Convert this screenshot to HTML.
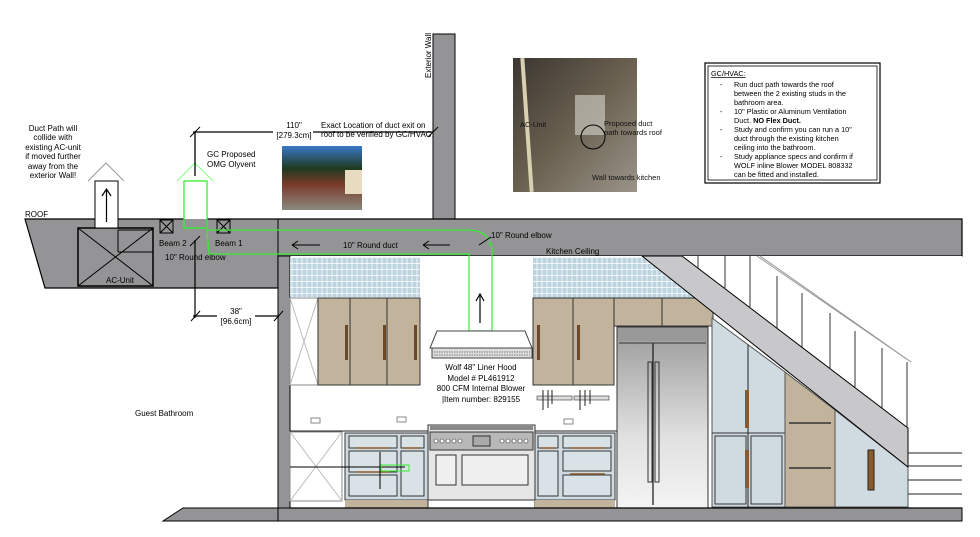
<!DOCTYPE html>
<html><head><meta charset="utf-8"><style>
html,body{margin:0;padding:0;background:#fff;width:980px;height:537px;overflow:hidden}
svg{display:block;font-family:"Liberation Sans",sans-serif}
</style></head><body>
<svg width="980" height="537" viewBox="0 0 980 537" xmlns="http://www.w3.org/2000/svg">
<defs>
<pattern id="tile" width="10" height="6" patternUnits="userSpaceOnUse">
<rect width="10" height="6" fill="#bcd4df"/>
<path d="M0 5.5H10M2 0V6M7 0V6" stroke="#fff" stroke-width="0.8"/>
</pattern>
<linearGradient id="fr" x1="0" y1="0" x2="0" y2="1">
<stop offset="0" stop-color="#9a9a9a"/><stop offset="0.6" stop-color="#e0e0e0"/><stop offset="1" stop-color="#f4f4f4"/>
</linearGradient>
<linearGradient id="ph1" x1="0" y1="0" x2="0" y2="1">
<stop offset="0" stop-color="#3a78c8"/><stop offset="0.35" stop-color="#1e3a20"/><stop offset="0.6" stop-color="#7a3a2a"/><stop offset="1" stop-color="#8a8a80"/>
</linearGradient>
<linearGradient id="ph2" x1="0" y1="0" x2="1" y2="1">
<stop offset="0" stop-color="#3a3630"/><stop offset="0.5" stop-color="#6a6050"/><stop offset="1" stop-color="#9a9488"/>
</linearGradient>
</defs>

<!-- exterior wall -->
<rect x="433" y="34" width="22" height="186" fill="#949496" stroke="#000" stroke-width="1"/>
<text x="0" y="0" font-size="8" transform="translate(431,78) rotate(-90)">Exterior Wall</text>

<!-- roof slab -->
<polygon points="25,219 962,219 962,256 278,256 278,288 45,288" fill="#949496" stroke="#000" stroke-width="1.2"/>
<line x1="278" y1="219" x2="278" y2="256" stroke="#000"/>
<text x="25" y="217" font-size="8">ROOF</text>

<!-- kitchen area white -->
<rect x="290" y="256" width="672" height="252" fill="#fff"/>
<!-- kitchen wall -->
<rect x="278" y="256" width="12" height="264" fill="#949496" stroke="#000"/>
<!-- bottom slab -->
<polygon points="163,521 183,508 962,508 962,521" fill="#949496" stroke="#000" stroke-width="1"/>
<line x1="278" y1="508" x2="278" y2="521" stroke="#000"/>

<!-- AC unit -->
<rect x="78" y="228" width="75" height="58" fill="none" stroke="#000" stroke-width="1.5"/>
<path d="M78 228L153 286M153 228L78 286" stroke="#000"/>
<text x="106" y="283" font-size="8">AC-Unit</text>
<path d="M118 230H153M118 252H153M118 230V252" stroke="#000" fill="none"/>
<!-- beams -->
<rect x="160" y="220" width="13" height="13" fill="none" stroke="#000"/><path d="M160 220L173 233M173 220L160 233" stroke="#000"/>
<rect x="217" y="220" width="13" height="13" fill="none" stroke="#000"/><path d="M217 220L230 233M230 220L217 233" stroke="#000"/>
<text x="159" y="246" font-size="8">Beam 2</text>
<text x="215" y="246" font-size="8">Beam 1</text>
<text x="165" y="260" font-size="8">10" Round elbow</text>
<line x1="195" y1="240" x2="195" y2="318" stroke="#000" stroke-width="1.2"/>
<line x1="190" y1="246" x2="200" y2="236" stroke="#000"/>

<!-- AC duct arrow box -->
<polyline points="88,181 106,163 124,181" fill="none" stroke="#999"/>
<rect x="95" y="181" width="23" height="47" fill="#fff" stroke="#000"/>
<path d="M106.5 222V190M102 196L106.5 189L111 196" stroke="#000" fill="none" stroke-width="1.2"/>
<text font-size="8" text-anchor="middle"><tspan x="53" y="131">Duct Path will</tspan><tspan x="53" y="140">collide with</tspan><tspan x="53" y="150">existing AC-unit</tspan><tspan x="53" y="159">if moved further</tspan><tspan x="53" y="169">away from the</tspan><tspan x="53" y="178">exterior Wall!</tspan></text>

<!-- green duct -->
<polyline points="177,181 195,163 213,181" fill="none" stroke="#8f8" stroke-width="1"/>
<rect x="184" y="181" width="23" height="47" fill="#949496" stroke="#3e3" stroke-width="1.2"/>
<rect x="184" y="181" width="23" height="38" fill="#fff"/>
<path d="M184 181H207V228M184 181V228H207" fill="none" stroke="#3e3" stroke-width="1.2"/>
<path d="M207 230H468Q492 230 492 254V331H469V254H209Z" fill="none" stroke="#3e3" stroke-width="1.2"/>
<line x1="195" y1="132" x2="195" y2="176" stroke="#000" stroke-width="1.3"/>
<!-- dim line -->
<line x1="193" y1="132" x2="273" y2="132" stroke="#000" stroke-width="1.2"/>
<line x1="313" y1="132" x2="433" y2="132" stroke="#000" stroke-width="1.2"/>
<line x1="190" y1="137" x2="200" y2="127" stroke="#000"/>
<line x1="428" y1="137" x2="438" y2="127" stroke="#000"/>
<text x="294" y="128" font-size="8" text-anchor="middle">110"</text>
<text x="294" y="138" font-size="8" text-anchor="middle">[279.3cm]</text>
<text font-size="8"><tspan x="321" y="128">Exact Location of duct exit on</tspan><tspan x="321" y="137">roof to be verified by GC/HVAC.</tspan></text>
<text font-size="8"><tspan x="207" y="157">GC Proposed</tspan><tspan x="207" y="167">OMG Olyvent</tspan></text>
<!-- photo 1 -->
<rect x="282" y="146" width="80" height="64" fill="url(#ph1)"/>
<rect x="345" y="170" width="17" height="24" fill="#e8dcc0"/>
<!-- 38 dim -->
<line x1="193" y1="316" x2="217" y2="316" stroke="#000" stroke-width="1.2"/>
<line x1="255" y1="316" x2="279" y2="316" stroke="#000" stroke-width="1.2"/>
<line x1="191" y1="321" x2="200" y2="311" stroke="#000"/>
<line x1="274" y1="321" x2="283" y2="311" stroke="#000"/>
<text x="236" y="314" font-size="8" text-anchor="middle">38"</text>
<text x="236" y="324" font-size="8" text-anchor="middle">[96.6cm]</text>

<!-- round duct labels -->
<path d="M292 245H320M292 245L298 241M292 245L298 249" stroke="#000" fill="none"/>
<path d="M423 245H450M423 245L429 241M423 245L429 249" stroke="#000" fill="none"/>
<text x="343" y="248" font-size="8">10" Round duct</text>
<text x="491" y="238" font-size="8">10" Round elbow</text>
<line x1="479" y1="245" x2="491" y2="237" stroke="#000"/>
<text x="546" y="254" font-size="8">Kitchen Ceiling</text>

<!-- photo 2 -->
<rect x="513" y="58" width="124" height="134" fill="url(#ph2)"/>
<rect x="525" y="58" width="4" height="134" fill="#d8d0b0" transform="rotate(-4 527 125)"/>
<rect x="575" y="95" width="30" height="40" fill="#c8c4bc" opacity="0.7"/>
<circle cx="593" cy="137" r="12" fill="none" stroke="#000"/>
<text font-size="7.5" fill="#111"><tspan x="520" y="127">AC-Unit</tspan><tspan x="604" y="126">Proposed duct</tspan><tspan x="604" y="135">path towards roof</tspan><tspan x="592" y="180">Wall towards kitchen</tspan></text>

<!-- notes box -->
<rect x="705" y="63" width="175" height="120" fill="#fff" stroke="#000" stroke-width="1.2"/>
<rect x="708" y="66" width="169" height="114" fill="none" stroke="#000" stroke-width="0.8"/>
<text font-size="7.3"><tspan x="711" y="76" text-decoration="underline">GC/HVAC:</tspan>
<tspan x="720" y="87">-</tspan><tspan x="734" y="87">Run duct path towards the roof</tspan>
<tspan x="734" y="96">between the 2 existing studs in the</tspan>
<tspan x="734" y="105">bathroom area.</tspan>
<tspan x="720" y="114">-</tspan><tspan x="734" y="114">10" Plastic or Aluminum Ventilation</tspan>
<tspan x="734" y="123">Duct. <tspan font-weight="bold">NO Flex Duct.</tspan></tspan>
<tspan x="720" y="132">-</tspan><tspan x="734" y="132">Study and confirm you can run a 10"</tspan>
<tspan x="734" y="141">duct through the existing kitchen</tspan>
<tspan x="734" y="150">ceiling into the bathroom.</tspan>
<tspan x="720" y="159">-</tspan><tspan x="734" y="159">Study appliance specs and confirm if</tspan>
<tspan x="734" y="168">WOLF inline Blower MODEL 808332</tspan>
<tspan x="734" y="177">can be fitted and installed.</tspan></text>

<!-- backsplash -->
<rect x="290" y="257" width="130" height="40" fill="url(#tile)"/>
<polygon points="533,257 642,257 700,298 533,298" fill="url(#tile)"/>
<!-- upper cabinets left -->
<rect x="290" y="298" width="28" height="87" fill="#fff" stroke="#888"/>
<path d="M290 298L318 385M318 298L290 385" stroke="#bbb"/>
<rect x="318" y="298" width="102" height="87" fill="#c2b49c" stroke="#333"/>
<path d="M350 298V385M387 298V385" stroke="#333"/>
<rect x="345" y="325" width="3" height="35" fill="#6a4a2a"/><rect x="383" y="325" width="3" height="35" fill="#6a4a2a"/><rect x="414" y="325" width="3" height="35" fill="#6a4a2a"/>
<!-- upper right cabinets -->
<rect x="533" y="298" width="81" height="87" fill="#c2b49c" stroke="#333"/>
<line x1="573" y1="298" x2="573" y2="385" stroke="#333"/>
<rect x="537" y="325" width="3" height="35" fill="#6a4a2a"/><rect x="577" y="325" width="3" height="35" fill="#6a4a2a"/>
<polygon points="614,298 700,298 713,308 713,326 614,326" fill="#c2b49c" stroke="#333"/>
<line x1="662" y1="298" x2="662" y2="326" stroke="#333"/>

<!-- hood -->
<polygon points="437,331 525,331 532,348 430,348" fill="#fff" stroke="#444"/>
<rect x="432" y="348" width="100" height="10" fill="#ddd" stroke="#444"/>
<path d="M434 352H530M434 355H530" stroke="#777" stroke-dasharray="1.5 1"/>
<path d="M480 323V295M476 301L480 294L484 301" stroke="#000" fill="none" stroke-width="1.2"/>
<text font-size="8" text-anchor="middle"><tspan x="481" y="370">Wolf 48" Liner Hood</tspan><tspan x="481" y="381">Model # PL461912</tspan><tspan x="481" y="391">800 CFM Internal Blower</tspan><tspan x="481" y="402">|Item number: 829155</tspan></text>
<text x="135" y="416" font-size="8">Guest Bathroom</text>
<!-- knife racks -->
<rect x="537" y="396" width="35" height="4" fill="#ddd" stroke="#333" stroke-width="0.6"/>
<rect x="574" y="396" width="35" height="4" fill="#ddd" stroke="#333" stroke-width="0.6"/>
<path d="M543 390V410M548 390V408M552 390V404M580 390V410M585 390V406M590 390V404" stroke="#222"/>
<!-- outlets -->
<rect x="311" y="418" width="9" height="5" fill="none" stroke="#888"/><rect x="397" y="417" width="9" height="5" fill="none" stroke="#888"/><rect x="564" y="419" width="9" height="5" fill="none" stroke="#888"/>

<!-- base cabinets -->
<line x1="290" y1="431" x2="617" y2="431" stroke="#222"/>
<rect x="290" y="432" width="52" height="69" fill="#fff" stroke="#888"/>
<path d="M290 432L342 501M342 432L290 501" stroke="#bbb"/>
<rect x="345" y="433" width="83" height="67" fill="#cfdbe0" stroke="#333"/>
<rect x="349" y="436" width="48" height="12" fill="#d9e3e7" stroke="#333"/><rect x="401" y="436" width="23" height="12" fill="#d9e3e7" stroke="#333"/>
<rect x="349" y="451" width="48" height="21" fill="#d9e3e7" stroke="#333"/><rect x="401" y="451" width="23" height="45" fill="#d9e3e7" stroke="#333"/>
<rect x="349" y="475" width="48" height="21" fill="#d9e3e7" stroke="#333"/>
<path d="M356 448H390M356 472H390M403 448H420" stroke="#8a5a2a" stroke-width="1.4"/>
<rect x="345" y="500" width="83" height="8" fill="#c2b49c"/>
<line x1="290" y1="467" x2="405" y2="467" stroke="#000"/>
<line x1="380" y1="452" x2="380" y2="489" stroke="#000"/>
<rect x="381" y="465" width="28" height="6" fill="none" stroke="#3e3"/>
<!-- range -->
<rect x="428" y="425" width="107" height="76" fill="#e6e6e6" stroke="#333"/>
<rect x="430" y="426" width="103" height="4" fill="#888"/>
<rect x="430" y="432" width="103" height="18" fill="#b8b8b8" stroke="#333"/>
<g fill="#fff" stroke="#333" stroke-width="0.6"><circle cx="436" cy="441" r="2"/><circle cx="442" cy="441" r="2"/><circle cx="448" cy="441" r="2"/><circle cx="454" cy="441" r="2"/><circle cx="460" cy="441" r="2"/><circle cx="502" cy="441" r="2"/><circle cx="508" cy="441" r="2"/><circle cx="514" cy="441" r="2"/><circle cx="520" cy="441" r="2"/><circle cx="526" cy="441" r="2"/></g>
<rect x="473" y="436" width="17" height="10" fill="#aaa" stroke="#333"/>
<rect x="436" y="455" width="20" height="30" fill="#f0f0f0" stroke="#333"/>
<rect x="462" y="455" width="66" height="30" fill="#f0f0f0" stroke="#333"/>
<rect x="428" y="500" width="107" height="8" fill="#fff" stroke="#333"/>
<!-- right base -->
<rect x="535" y="433" width="80" height="67" fill="#cfdbe0" stroke="#333"/>
<rect x="538" y="436" width="20" height="12" fill="#d9e3e7" stroke="#333"/><rect x="563" y="436" width="48" height="12" fill="#d9e3e7" stroke="#333"/>
<rect x="538" y="451" width="20" height="45" fill="#d9e3e7" stroke="#333"/><rect x="563" y="451" width="48" height="20" fill="#d9e3e7" stroke="#333"/><rect x="563" y="475" width="48" height="21" fill="#d9e3e7" stroke="#333"/>
<path d="M541 448H555M570 448H605M570 474H605" stroke="#8a5a2a" stroke-width="1.4"/>
<rect x="535" y="500" width="80" height="8" fill="#c2b49c"/>

<!-- fridge -->
<rect x="617" y="327" width="91" height="181" fill="url(#fr)" stroke="#333"/>
<rect x="619" y="329" width="87" height="12" fill="#999"/>
<line x1="653" y1="343" x2="653" y2="505" stroke="#222" stroke-width="1.3"/>
<rect x="648" y="362" width="4" height="120" fill="none" stroke="#333"/><rect x="655" y="362" width="4" height="120" fill="none" stroke="#333"/>
<line x1="619" y1="343" x2="706" y2="343" stroke="#333"/>

<!-- pantry blue tall -->
<polygon points="712,318 785,372 785,507 712,507" fill="#cfdbe0" stroke="#555"/>
<line x1="748" y1="345" x2="748" y2="507" stroke="#222"/>
<line x1="712" y1="433" x2="785" y2="433" stroke="#333"/>
<rect x="715" y="436" width="31" height="68" fill="none" stroke="#333"/><rect x="751" y="436" width="31" height="68" fill="none" stroke="#333"/>
<rect x="745" y="390" width="4" height="38" fill="#8a5a2a"/><rect x="745" y="450" width="4" height="38" fill="#8a5a2a"/>
<!-- tan -->
<polygon points="785,372 835,410 835,507 785,507" fill="#c2b49c" stroke="#555"/>
<path d="M789 423H831M789 468H831" stroke="#333" stroke-width="1.5"/>
<!-- right blue -->
<polygon points="835,410 908,467 908,507 835,507" fill="#cfdbe0" stroke="#555"/>
<rect x="868" y="450" width="6" height="40" fill="#8a5a2a" stroke="#222"/>

<!-- stair band -->
<polygon points="642,256 682,256 908,428 908,467" fill="#c8c8ca" stroke="#000" stroke-width="1"/>
<!-- railing -->
<g stroke="#333" stroke-width="1">
<line x1="698" y1="256" x2="698" y2="268"/><line x1="725" y1="256" x2="725" y2="289"/><line x1="750" y1="256" x2="750" y2="308"/><line x1="777" y1="276" x2="777" y2="328"/><line x1="802" y1="293" x2="802" y2="347"/><line x1="830" y1="313" x2="830" y2="368"/><line x1="855" y1="331" x2="855" y2="387"/><line x1="882" y1="348" x2="882" y2="408"/><line x1="907" y1="362" x2="907" y2="428"/>
</g>
<line x1="757" y1="256" x2="908" y2="360" stroke="#999"/>
<line x1="760" y1="256" x2="911" y2="362" stroke="#999"/>
<g stroke="#222"><line x1="908" y1="453" x2="962" y2="453"/><line x1="908" y1="466" x2="962" y2="466"/><line x1="908" y1="480" x2="962" y2="480"/><line x1="908" y1="494" x2="962" y2="494"/></g>
<line x1="290" y1="508" x2="962" y2="508" stroke="#000" stroke-width="1.2"/>
</svg>
</body></html>
